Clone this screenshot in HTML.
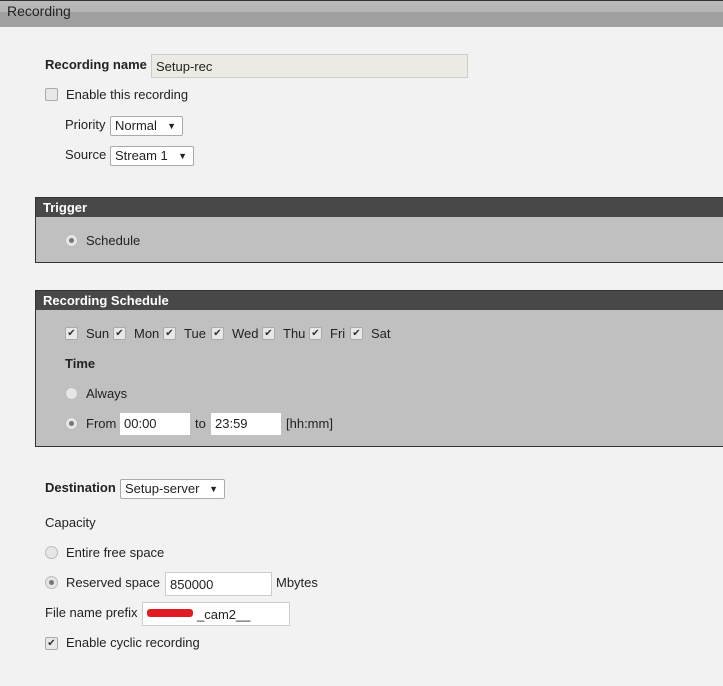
<!DOCTYPE html>
<html><head><style>
body{margin:0;width:723px;height:686px;overflow:hidden;background:#f2f2f2;font-family:"Liberation Sans",Arial,sans-serif;font-size:13px;color:#222;position:relative}
.a{position:absolute;white-space:nowrap}
.hdr{position:absolute;left:0;top:0;width:723px;height:27px;background:linear-gradient(#333 0,#333 1px,#bbb 1px,#b4b4b4 12px,#a0a0a0 12px,#a0a0a0 27px)}
.box{position:absolute;left:35px;width:700px;background:#c0c0c0;border:1px solid #333}
.bh{height:19px;background:#484848;color:#fff;font-weight:bold;font-size:13px;line-height:19px;padding-left:7px}
.inp{position:absolute;background:#fff;border:1px solid #ccc;height:22px;box-sizing:border-box;line-height:22px;padding-left:4px}
.sel{position:absolute;background:#fff;border:1px solid #aaa;height:20px;box-sizing:border-box;line-height:18px;padding-left:4px;border-radius:2px}
.sel:after{content:"▼";position:absolute;right:6px;top:0;font-size:9px}
.cb{position:absolute;width:13px;height:13px;border:1px solid #aaa;border-radius:2px;background:#e8e8e8;box-sizing:border-box;font-size:10px;line-height:11px;text-align:center;color:#333}
.rd{position:absolute;width:13px;height:13px;border:1px solid #bbb;border-radius:50%;background:#e6e6e6;box-sizing:border-box}
.rd.on:after{content:"";position:absolute;left:3px;top:3px;width:5px;height:5px;border-radius:50%;background:#777}
b{font-weight:bold}
</style></head><body>
<div class="hdr"></div>
<div class="a" style="left:7px;top:3px;font-size:14px;color:#222">Recording</div>

<div class="a" style="left:45px;top:57px"><b>Recording name</b></div>
<div class="inp" style="left:151px;top:54px;width:317px;height:24px;background:#ebebe4;line-height:24px">Setup-rec</div>
<div class="cb" style="left:45px;top:88px"></div>
<div class="a" style="left:66px;top:87px">Enable this recording</div>
<div class="a" style="left:65px;top:117px">Priority</div>
<div class="sel" style="left:110px;top:116px;width:73px">Normal</div>
<div class="a" style="left:65px;top:147px">Source</div>
<div class="sel" style="left:110px;top:146px;width:84px">Stream 1</div>

<div class="box" style="top:197px;height:64px"><div class="bh">Trigger</div></div>
<div class="rd on" style="left:65px;top:234px"></div>
<div class="a" style="left:86px;top:233px">Schedule</div>

<div class="box" style="top:290px;height:155px"><div class="bh">Recording Schedule</div></div>
<div class="cb" style="left:65px;top:327px">✔</div><div class="a" style="left:86px;top:326px">Sun</div>
<div class="cb" style="left:113px;top:327px">✔</div><div class="a" style="left:134px;top:326px">Mon</div>
<div class="cb" style="left:163px;top:327px">✔</div><div class="a" style="left:184px;top:326px">Tue</div>
<div class="cb" style="left:211px;top:327px">✔</div><div class="a" style="left:232px;top:326px">Wed</div>
<div class="cb" style="left:262px;top:327px">✔</div><div class="a" style="left:283px;top:326px">Thu</div>
<div class="cb" style="left:309px;top:327px">✔</div><div class="a" style="left:330px;top:326px">Fri</div>
<div class="cb" style="left:350px;top:327px">✔</div><div class="a" style="left:371px;top:326px">Sat</div>
<div class="a" style="left:65px;top:356px"><b>Time</b></div>
<div class="rd" style="left:65px;top:387px"></div><div class="a" style="left:86px;top:386px">Always</div>
<div class="rd on" style="left:65px;top:417px"></div><div class="a" style="left:86px;top:416px">From</div>
<div class="inp" style="left:120px;top:413px;width:70px;border:none">00:00</div>
<div class="a" style="left:195px;top:416px">to</div>
<div class="inp" style="left:211px;top:413px;width:70px;border:none">23:59</div>
<div class="a" style="left:286px;top:416px">[hh:mm]</div>

<div class="a" style="left:45px;top:480px"><b>Destination</b></div>
<div class="sel" style="left:120px;top:479px;width:105px">Setup-server</div>
<div class="a" style="left:45px;top:515px">Capacity</div>
<div class="rd" style="left:45px;top:546px"></div><div class="a" style="left:66px;top:545px">Entire free space</div>
<div class="rd on" style="left:45px;top:576px"></div><div class="a" style="left:66px;top:575px">Reserved space</div>
<div class="inp" style="left:165px;top:572px;width:107px;height:24px;line-height:24px">850000</div>
<div class="a" style="left:276px;top:575px">Mbytes</div>
<div class="a" style="left:45px;top:605px">File name prefix</div>
<div class="inp" style="left:142px;top:602px;width:148px;height:24px;line-height:24px;padding-left:54px">_cam2__</div>
<div class="a" style="left:147px;top:609px;width:46px;height:8px;background:#e01b22;border-radius:3px"></div>
<div class="cb" style="left:45px;top:637px">✔</div>
<div class="a" style="left:66px;top:635px">Enable cyclic recording</div>
</body></html>
